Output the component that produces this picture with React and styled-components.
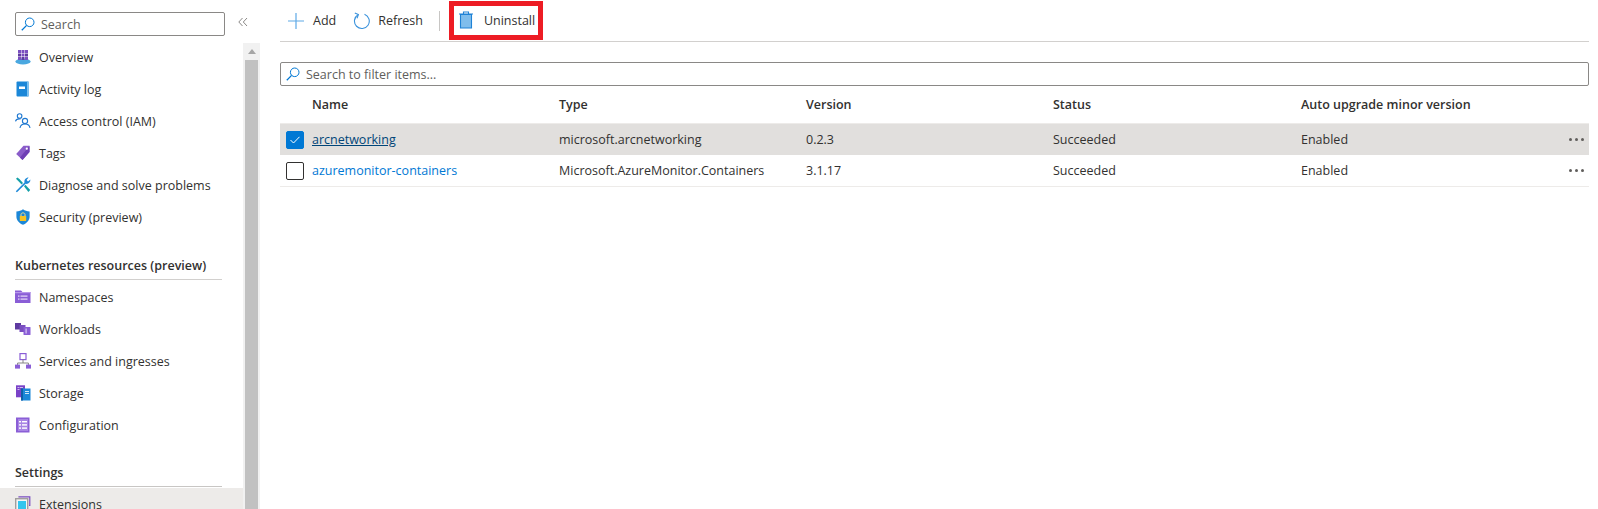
import React from 'react';
import styled, { createGlobalStyle } from 'styled-components';

const GlobalStyle = createGlobalStyle`
html, body {
  margin: 0;
  padding: 0;
  background: #fff;
}
body {
  font-family: "Open Sans", "Noto Sans", "Liberation Sans", sans-serif;
  font-size: 12.5px;
  color: #323130;
}
`;

const Page = styled.div`
width: 1598px;
height: 509px;
display: flex;
overflow: hidden;
`;

const Sidebar = styled.aside`
width: 260px;
flex: none;
display: flex;
flex-direction: column;
`;
const SearchRow = styled.div`
height: 43px;
flex: none;
display: flex;
align-items: flex-start;
padding: 12px 0 0 15px;
box-sizing: border-box;
`;
const SearchBox = styled.div`
height: ${props => props.$wide ? '24px' : '24px'};
width: ${props => props.$wide ? '100%' : '210px'};
box-sizing: border-box;
border: 1px solid #8a8886;
border-radius: 2px;
display: flex;
align-items: center;
gap: 6px;
padding-left: 5px;
color: #605e5c;
`;
const Collapse = styled.div`
margin-left: 13px;
margin-top: 5px;
color: #8a8886;
line-height: 0;
`;
const SideBody = styled.div`
flex: 1;
display: flex;
min-height: 0;
`;
const Nav = styled.nav`
width: 243px;
flex: none;
`;
const NavGroup = styled.div`
margin-top: -2px;
`;
const NavItem = styled.div`
height: 32px;
display: flex;
align-items: center;
gap: 8px;
padding-left: 15px;
background: ${props => props.$active ? '#edebe9' : 'transparent'};
`;
const IconSlot = styled.span`
width: 16px;
height: 16px;
flex: none;
line-height: 0;
`;
const SectionTitle = styled.div`
margin: ${props => props.$first ? '24px' : '23px'} 21px 0 15px;
height: 22px;
font-weight: 600;
border-bottom: 1px solid ${props => props.$dark ? '#c8c6c4' : '#d2d0ce'};
`;
const SectionItems = styled.div`
padding-top: 1px;
`;
const Scrollbar = styled.div`
width: 17px;
flex: none;
background: #f1f1f1;
padding: 0 2px;
box-sizing: border-box;
`;
const ScrollArrow = styled.div`
height: 17px;
display: flex;
align-items: center;
justify-content: center;
`;
const ScrollThumb = styled.div`
height: 100%;
background: #c1c1c1;
`;

const Main = styled.main`
flex: 1;
min-width: 0;
padding: 0 9px 0 20px;
`;
const Toolbar = styled.div`
height: 42px;
box-sizing: border-box;
border-bottom: 1px solid #d2d0ce;
display: flex;
align-items: center;
padding-left: 8px;
`;
const ToolButton = styled.div`
display: flex;
align-items: center;
gap: ${props => props.$gap || 8}px;
margin-right: ${props => props.$mr || 0}px;
`;
const Divider = styled.div`
width: 1px;
height: 20px;
background: #c8c6c4;
margin: 0 9px 0 16px;
`;
const Highlight = styled.div`
border: 5px solid #ed1c24;
height: 39px;
width: 94px;
box-sizing: border-box;
margin-top: -1px;
display: flex;
align-items: center;
padding-left: 5px;
gap: 11px;
`;
const FilterWrap = styled.div`
margin-top: 20px;
`;
const Row = styled.div`
display: grid;
grid-template-columns: 32px 247px 247px 247px 248px 1fr 34px;
align-items: center;
height: ${props => props.$head ? '37px' : '31px'};
background: ${props => props.$selected ? '#e1dfdd' : 'transparent'};
border-bottom: ${props => props.$line ? '1px solid #edebe9' : 'none'};
font-weight: ${props => props.$head ? 600 : 400};
`;
const Check = styled.span`
width: 18px;
height: 18px;
margin-left: 6px;
box-sizing: border-box;
border-radius: 2px;
border: 1px solid ${props => props.$on ? '#0078d4' : '#323130'};
background: ${props => props.$on ? '#0078d4' : '#fff'};
display: flex;
align-items: center;
justify-content: center;
`;
const NameLink = styled.a`
color: ${props => props.$on ? '#004578' : '#0078d4'};
text-decoration: ${props => props.$on ? 'underline' : 'none'};
`;
const Dots = styled.span`
display: flex;
gap: 3px;
justify-content: flex-end;
padding-right: 5px;
`;
const Dot = styled.i`
width: 3px;
height: 3px;
border-radius: 50%;
background: #605e5c;
`;

const Magnifier = () => (
  <svg width="14" height="14" viewBox="0 0 14 14" fill="none" stroke="#0078d4" strokeWidth="1">
    <circle cx="8.7" cy="5.3" r="4.3" />
    <path d="M5.6 8.4 L0.8 13.2" strokeWidth="1.3" />
  </svg>
);

const icons = {
  overview: (
    <svg width="16" height="16" viewBox="0 0 16 16">
      <ellipse cx="8" cy="12.5" rx="7.6" ry="3" fill="#4aa8e0" />
      <g fill="#7a4fc0">
        <rect x="3" y="1" width="3" height="3" /><rect x="6.5" y="1" width="3" height="3" /><rect x="10" y="1" width="3" height="3" />
        <rect x="3" y="4.5" width="3" height="3" fill="#5e3aa0" /><rect x="6.5" y="4.5" width="3" height="3" /><rect x="10" y="4.5" width="3" height="3" fill="#5e3aa0" />
        <rect x="3" y="8" width="3" height="3" /><rect x="6.5" y="8" width="3" height="3" fill="#5e3aa0" /><rect x="10" y="8" width="3" height="3" />
      </g>
    </svg>
  ),
  log: (
    <svg width="16" height="16" viewBox="0 0 16 16">
      <rect x="1.5" y="0.5" width="12.5" height="15" rx="1" fill="#1b87d8" />
      <rect x="12" y="1" width="2" height="14" fill="#7cc0ef" />
      <rect x="4" y="5.5" width="6" height="2.5" fill="#fff" />
    </svg>
  ),
  iam: (
    <svg width="16" height="16" viewBox="0 0 16 16" fill="none" stroke="#1f78d1" strokeWidth="1.1">
      <circle cx="4.6" cy="3" r="2.3" />
      <path d="M0.5 8.3 C1 6.3 3 5.6 5.6 6" />
      <circle cx="10" cy="8" r="2.6" />
      <path d="M5 15 C5.4 12 7.4 11 10 11 C12.6 11 14.6 12 15 15" />
    </svg>
  ),
  tags: (
    <svg width="16" height="16" viewBox="0 0 16 16">
      <path d="M8.5 0.8 H14.5 V7 L7.5 15 L1.2 9 Z" fill="#8a5cc9" />
      <path d="M14.5 1 V7 L7.5 15 L5 12.6 Z" fill="#6f3fb5" />
      <circle cx="11.8" cy="3.7" r="1.1" fill="#fff" />
    </svg>
  ),
  wrench: (
    <svg width="16" height="16" viewBox="0 0 16 16">
      <path d="M1.5 15 L0.8 14.2 L9.5 5.5 C9 3 10.6 0.6 13.6 0.6 L11.6 3 L13 4.6 L15.4 2.6 C15.6 5.4 13.2 7.4 10.6 6.8 L2 15.2 Z" fill="#1f8ad8" />
      <path d="M1 1.8 L2.4 0.6 L4.4 2 L8 6 L6.6 7.5 L3 3.8 Z" fill="#15a0a8" />
      <path d="M9 9.2 L10.4 7.8 L15.2 13 L13.4 15 Z" fill="#15a0a8" />
    </svg>
  ),
  shield: (
    <svg width="16" height="16" viewBox="0 0 16 16">
      <path d="M8 0.3 C10 1.8 12 2.4 14.6 2.4 V7.8 C14.6 11.4 11.6 14.4 8 15.8 C4.4 14.4 1.4 11.4 1.4 7.8 V2.4 C4 2.4 6 1.8 8 0.3 Z" fill="#1b87d8" />
      <rect x="4.8" y="7" width="6.4" height="5" rx="0.4" fill="#f7c325" />
      <path d="M6 7 V5.4 C6 3.4 10 3.4 10 5.4 V7" fill="none" stroke="#f7e08a" strokeWidth="1" />
    </svg>
  ),
  namespaces: (
    <svg width="16" height="16" viewBox="0 0 16 16">
      <path d="M0 1.5 H6 L7.5 3 H15.5 V14 H0 Z" fill="#8a5ed6" />
      <rect x="0" y="3" width="15.5" height="1.2" fill="#b796ea" />
      <g fill="#e8dcf8">
        <rect x="3" y="6.5" width="1.5" height="1.2" /><rect x="5.5" y="6.5" width="7" height="1.2" />
        <rect x="3" y="9.5" width="1.5" height="1.2" /><rect x="5.5" y="9.5" width="7" height="1.2" />
      </g>
    </svg>
  ),
  workloads: (
    <svg width="16" height="16" viewBox="0 0 16 16">
      <rect x="0" y="2" width="6" height="6.5" fill="#5e3aa0" />
      <rect x="4.5" y="4" width="6" height="7" fill="#7a4fc0" />
      <rect x="8.5" y="6" width="7" height="8" rx="0.6" fill="#8a5ed6" />
      <rect x="10.5" y="7.5" width="1.2" height="5" fill="#d9c8f2" />
    </svg>
  ),
  services: (
    <svg width="16" height="16" viewBox="0 0 16 16">
      <rect x="5" y="0.6" width="6" height="6" fill="#fff" stroke="#8a5ed6" strokeWidth="1.2" />
      <path d="M8 6.6 V10 M2.6 12 V10 H13.4 V12" fill="none" stroke="#7a7a7a" strokeWidth="0.9" />
      <rect x="0" y="11.6" width="5" height="4" fill="#8a5ed6" />
      <rect x="11" y="11.6" width="5" height="4" fill="#8a5ed6" />
    </svg>
  ),
  storage: (
    <svg width="16" height="16" viewBox="0 0 16 16">
      <rect x="1" y="0.3" width="9" height="12" fill="#7a42c8" />
      <g fill="#cdb8ec"><rect x="2.5" y="2" width="2" height="1" /><rect x="5" y="2" width="3" height="1" /><rect x="2.5" y="4" width="2" height="1" /></g>
      <rect x="6" y="3.5" width="9.5" height="12" fill="#1b87d8" />
      <rect x="6" y="3.5" width="2" height="12" fill="#0f5fa8" />
      <g fill="#cfe6f8"><rect x="10" y="6" width="4" height="1" /><rect x="10" y="8" width="4" height="1" /></g>
    </svg>
  ),
  config: (
    <svg width="16" height="16" viewBox="0 0 16 16">
      <rect x="1" y="0.5" width="13.5" height="15" fill="#8a5ed6" />
      <rect x="3" y="2" width="10" height="12" fill="#a884e4" />
      <g fill="#fff">
        <rect x="4" y="4" width="2" height="1.4" /><rect x="7" y="4" width="5" height="1.4" />
        <rect x="4" y="7.2" width="2" height="1.4" /><rect x="7" y="7.2" width="5" height="1.4" />
        <rect x="4" y="10.4" width="2" height="1.4" /><rect x="7" y="10.4" width="5" height="1.4" />
      </g>
    </svg>
  ),
  extensions: (
    <svg width="16" height="16" viewBox="0 0 16 16">
      <path d="M4 1.5 V0.8 H14.8 V9.5 H14" fill="none" stroke="#7a4fc0" strokeWidth="1.2" />
      <rect x="0.7" y="2.7" width="12" height="12.4" fill="#f5f5f5" stroke="#a19f9d" strokeWidth="1.4" />
      <rect x="3" y="5" width="8" height="8" fill="#32c5ee" />
    </svg>
  ),
};

const topItems = [
  ['overview', 'Overview'],
  ['log', 'Activity log'],
  ['iam', 'Access control (IAM)'],
  ['tags', 'Tags'],
  ['wrench', 'Diagnose and solve problems'],
  ['shield', 'Security (preview)'],
];
const k8sItems = [
  ['namespaces', 'Namespaces'],
  ['workloads', 'Workloads'],
  ['services', 'Services and ingresses'],
  ['storage', 'Storage'],
  ['config', 'Configuration'],
];

const extensions = [
  { name: 'arcnetworking', type: 'microsoft.arcnetworking', version: '0.2.3', selected: true },
  { name: 'azuremonitor-containers', type: 'Microsoft.AzureMonitor.Containers', version: '3.1.17' },
];

const SideLink = ({ icon, label, active }) => (
  <NavItem $active={active}>
    <IconSlot>{icons[icon]}</IconSlot>
    <span>{label}</span>
  </NavItem>
);

export default function App() {
  return (
    <Page>
      <GlobalStyle />
      <Sidebar>
        <SearchRow>
          <SearchBox>
            <Magnifier />
            <span>Search</span>
          </SearchBox>
          <Collapse>
            <svg width="10" height="10" viewBox="0 0 10 10" fill="none" stroke="#8a8886" strokeWidth="1">
              <path d="M4.5 1 L0.8 5 L4.5 9 M9 1 L5.3 5 L9 9" />
            </svg>
          </Collapse>
        </SearchRow>
        <SideBody>
          <Nav>
            <NavGroup>
              {topItems.map(([icon, label]) => <SideLink key={label} icon={icon} label={label} />)}
            </NavGroup>
            <SectionTitle $first>Kubernetes resources (preview)</SectionTitle>
            <SectionItems>
              {k8sItems.map(([icon, label]) => <SideLink key={label} icon={icon} label={label} />)}
            </SectionItems>
            <SectionTitle $dark>Settings</SectionTitle>
            <SectionItems>
              <SideLink icon="extensions" label="Extensions" active />
            </SectionItems>
          </Nav>
          <Scrollbar>
            <ScrollArrow>
              <svg width="8" height="5" viewBox="0 0 8 5"><path d="M0 5 L4 0 L8 5 Z" fill="#a6a6a6" /></svg>
            </ScrollArrow>
            <ScrollThumb />
          </Scrollbar>
        </SideBody>
      </Sidebar>
      <Main>
        <Toolbar>
          <ToolButton $gap={9} $mr={17}>
            <svg width="16" height="16" viewBox="0 0 16 16" stroke="#5ea9e6" strokeWidth="1.2" fill="none">
              <path d="M8 0 V16 M0 8 H16" />
            </svg>
            <span>Add</span>
          </ToolButton>
          <ToolButton $gap={8}>
            <svg width="17" height="18" viewBox="0 0 17 18" fill="none" stroke="#3a92dc" strokeWidth="1.1">
              <path d="M5 2.8 A7.4 7.4 0 1 0 11.5 2.2" />
              <path d="M1.8 1 L5.4 2.6 L4 6.2" />
            </svg>
            <span>Refresh</span>
          </ToolButton>
          <Divider />
          <Highlight>
            <svg width="14" height="18" viewBox="0 0 14 18">
              <path d="M1.5 3.5 H12.5 V17 H1.5 Z" fill="#7fbdec" stroke="#1f82d6" strokeWidth="1.1" />
              <path d="M0 3 H14 M4.5 3 V1 H9.5 V3" fill="none" stroke="#1f82d6" strokeWidth="1.1" />
            </svg>
            <span>Uninstall</span>
          </Highlight>
        </Toolbar>
        <FilterWrap>
          <SearchBox $wide>
            <Magnifier />
            <span>Search to filter items...</span>
          </SearchBox>
        </FilterWrap>
        <Row $head $line>
          <span />
          <span>Name</span>
          <span>Type</span>
          <span>Version</span>
          <span>Status</span>
          <span>Auto upgrade minor version</span>
          <span />
        </Row>
        {extensions.map(ext => (
          <Row key={ext.name} $selected={ext.selected} $line={!ext.selected}>
            <Check $on={ext.selected}>
              {ext.selected && (
                <svg width="10" height="8" viewBox="0 0 10 8" fill="none" stroke="#fff" strokeWidth="1">
                  <path d="M0.5 4 L3.5 7 L9.5 0.8" />
                </svg>
              )}
            </Check>
            <span><NameLink $on={ext.selected}>{ext.name}</NameLink></span>
            <span>{ext.type}</span>
            <span>{ext.version}</span>
            <span>Succeeded</span>
            <span>Enabled</span>
            <Dots><Dot /><Dot /><Dot /></Dots>
          </Row>
        ))}
      </Main>
    </Page>
  );
}
